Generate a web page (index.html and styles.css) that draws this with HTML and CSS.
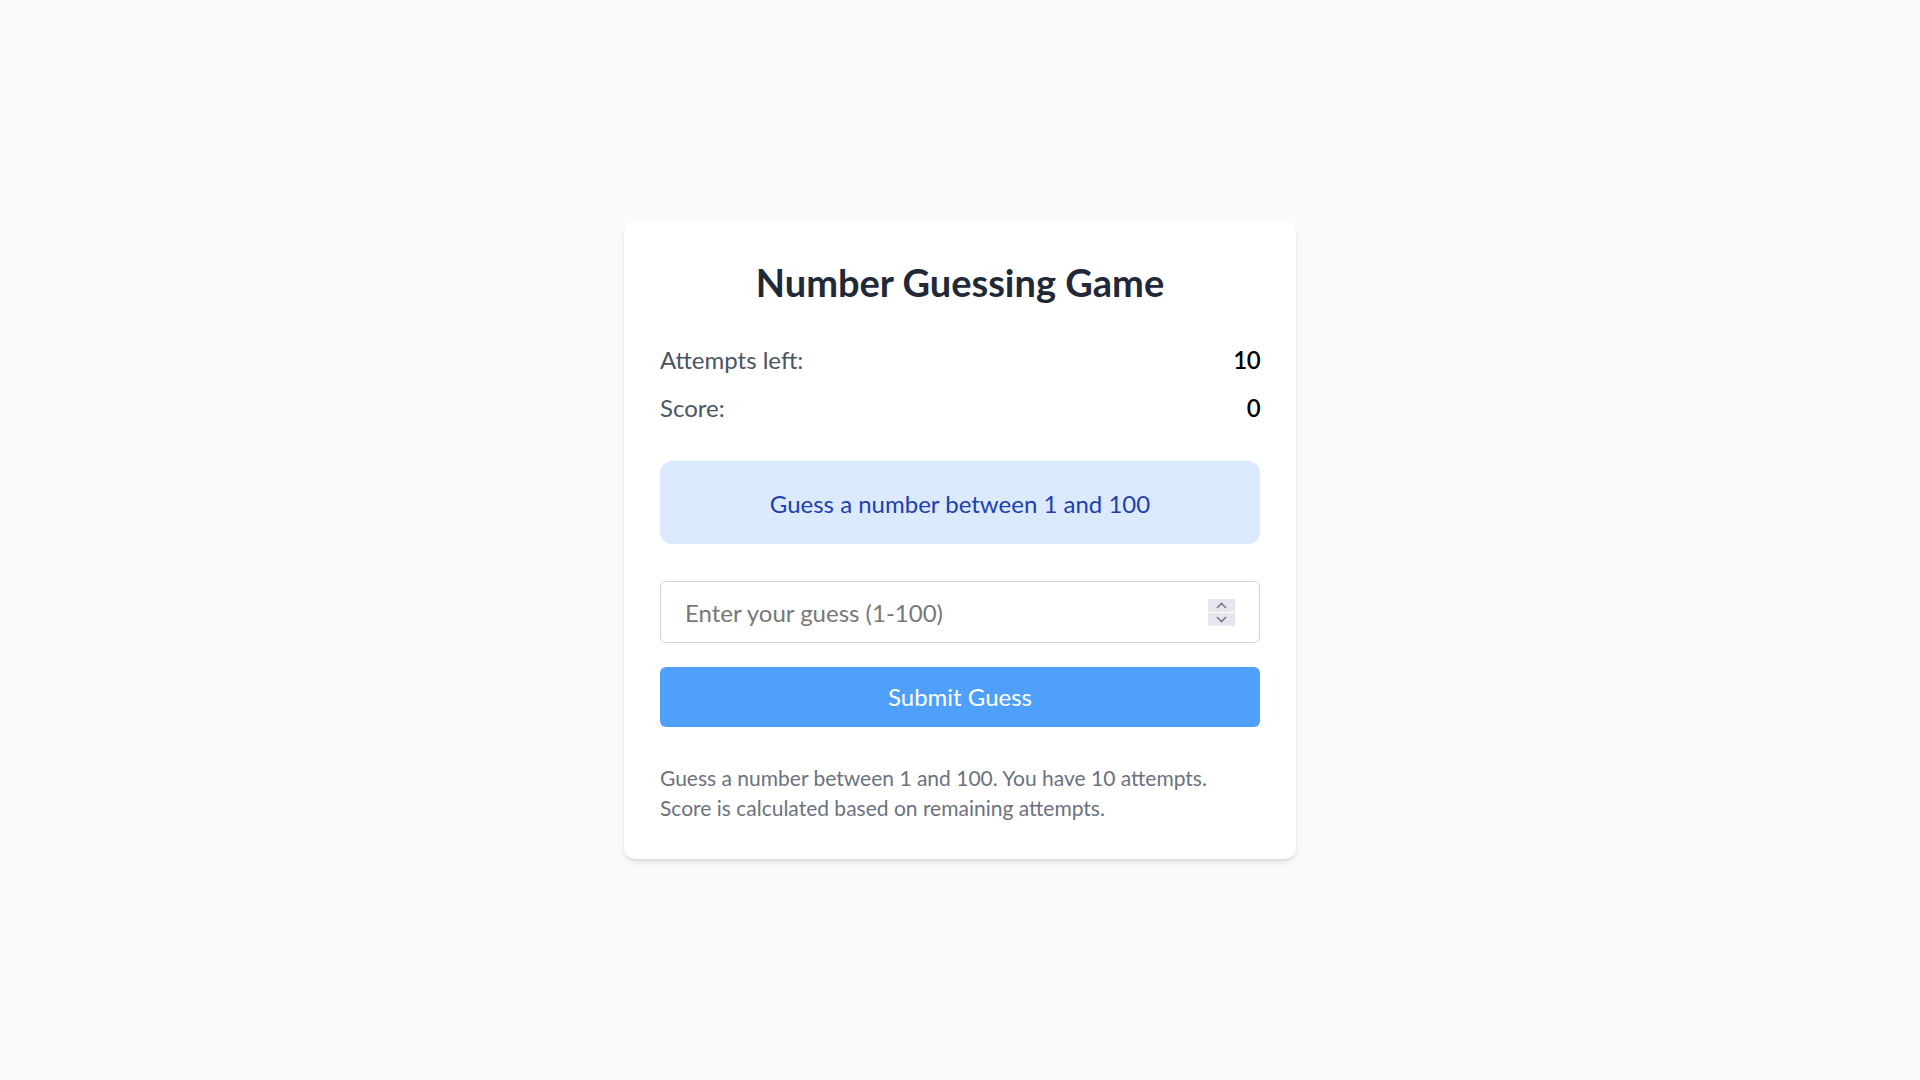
FILE: index.html
```html
<!DOCTYPE html>
<html lang="en">
<head>
<meta charset="utf-8">
<title>Number Guessing Game</title>
<link rel="stylesheet" href="styles.css">
</head>
<body>
<main class="card">
  <h1 class="title">Number Guessing Game</h1>
  <div class="stats">
    <div class="stat"><span class="stat-label">Attempts left:</span><span class="stat-value">10</span></div>
    <div class="stat"><span class="stat-label">Score:</span><span class="stat-value">0</span></div>
  </div>
  <div class="message">Guess a number between 1 and 100</div>
  <div class="field">
    <input class="guess-input" type="number" min="1" max="100" placeholder="Enter your guess (1-100)">
    <span class="spinner" aria-hidden="true">
      <span class="spin-btn"><svg width="13" height="9" viewBox="0 0 13 9"><path d="M2 7 L6.5 2.5 L11 7" fill="none" stroke="#7d7b88" stroke-width="1.6"/></svg></span>
      <span class="spin-btn"><svg width="13" height="9" viewBox="0 0 13 9"><path d="M2 2 L6.5 6.5 L11 2" fill="none" stroke="#7d7b88" stroke-width="1.6"/></svg></span>
    </span>
  </div>
  <button class="submit" type="button">Submit Guess</button>
  <p class="help">Guess a number between 1 and 100. You have 10 attempts.<br>Score is calculated based on remaining attempts.</p>
</main>
</body>
</html>
```
FILE: styles.css
```css
* { box-sizing: border-box; }
html, body { margin: 0; padding: 0; }
body {
  min-height: 100vh;
  background: #f9fafb;
  font-family: Lato, "Liberation Sans", sans-serif;
  display: flex;
  align-items: center;
  justify-content: center;
}
.card {
  width: 672px;
  background: #ffffff;
  border-radius: 12px;
  box-shadow: 0 4px 6px -1px rgba(0,0,0,0.1), 0 2px 4px -2px rgba(0,0,0,0.1);
  padding: 36px;
  display: flex;
  flex-direction: column;
}
.title {
  margin: 0;
  font-size: 38px;
  line-height: 50px;
  font-weight: 700;
  color: #1f2937;
  text-align: center;
}
.stats {
  margin-top: 35px;
  display: flex;
  flex-direction: column;
  gap: 12px;
}
.stat {
  display: flex;
  justify-content: space-between;
  font-size: 24px;
  line-height: 36px;
}
.stat-label { color: #4b5563; }
.stat-value { color: #000; font-weight: 600; letter-spacing: -0.6px; }
.message {
  margin-top: 35px;
  background: #dbeafe;
  color: #1e40af;
  border-radius: 12px;
  padding: 25px 24px 23px;
  font-size: 24px;
  line-height: 35px;
  text-align: center;
}
.field {
  position: relative;
  margin-top: 37px;
}
.guess-input {
  display: block;
  width: 100%;
  height: 62px;
  border: 1px solid #d1d5db;
  border-radius: 6px;
  padding: 12px 60px 12px 24px;
  font-family: inherit;
  font-size: 24px;
  line-height: 36px;
  color: #111827;
  background: #fff;
  outline: none;
  -moz-appearance: textfield;
  appearance: textfield;
}
.guess-input::-webkit-inner-spin-button,
.guess-input::-webkit-outer-spin-button { -webkit-appearance: none; margin: 0; }
.guess-input::placeholder { color: #787878; opacity: 1; }
.spinner {
  position: absolute;
  top: 18px;
  right: 25px;
  width: 27px;
  height: 27px;
  display: flex;
  flex-direction: column;
  gap: 1px;
}
.spin-btn {
  flex: 1;
  background: #e6e6ec;
  display: flex;
  align-items: center;
  justify-content: center;
}
.submit {
  margin-top: 24px;
  height: 60px;
  border: none;
  border-radius: 6px;
  background: #4fa0fd;
  color: #fff;
  font-family: inherit;
  font-size: 24px;
  line-height: 36px;
  cursor: pointer;
}
.help {
  margin: 36px 0 0;
  font-size: 21px;
  line-height: 30px;
  color: #6b7280;
}
```
